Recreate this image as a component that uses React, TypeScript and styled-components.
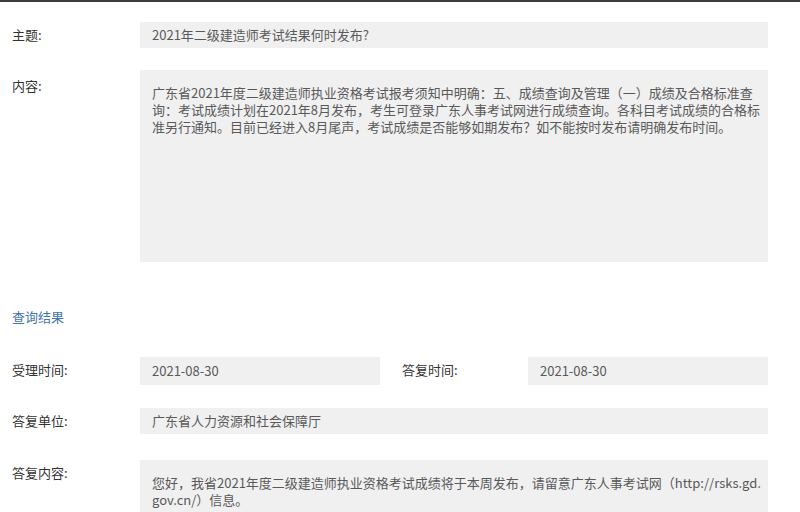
import React from "react";
import styled, { createGlobalStyle } from "styled-components";

const GlobalStyle = createGlobalStyle`
  html, body {
    margin: 0;
    padding: 0;
    background: #ffffff;
  }
  body {
    font-family: "Noto Sans CJK SC", "Noto Sans", sans-serif;
    font-size: 13px;
    color: #333;
  }
`;

const Page = styled.div`
  width: 800px;
  height: 512px;
  overflow: hidden;
  border-top: 2px solid #3c3c3c;
  box-sizing: border-box;
  padding: 0 32px 0 12px;
  display: flex;
  flex-direction: column;
`;

const Row = styled.div<{ $top: number }>`
  display: flex;
  align-items: flex-start;
  margin-top: ${(p) => p.$top}px;
`;

const Label = styled.div<{ $indent?: number; $drop?: number }>`
  flex: none;
  width: ${(p) => (p.$indent ? 126 : 128)}px;
  padding-left: ${(p) => p.$indent || 0}px;
  margin-top: ${(p) => p.$drop || 0}px;
  line-height: 26px;
  color: #333;
  white-space: nowrap;
`;

const Field = styled.div<{ $height?: number; $width?: number }>`
  ${(p) => (p.$width ? `width: ${p.$width}px; flex: none;` : "flex: 1;")}
  height: ${(p) => p.$height || 26}px;
  line-height: ${(p) => p.$height || 26}px;
  background: #f0f0f1;
  color: #595959;
  padding: 0 12px;
  box-sizing: border-box;
  white-space: nowrap;
  overflow: hidden;
`;

const TextArea = styled.div<{ $height: number }>`
  flex: 1;
  height: ${(p) => p.$height}px;
  background: #f0f0f1;
  color: #595959;
  padding: 14px 4px 0 12px;
  box-sizing: border-box;
  line-height: 17px;
  word-break: break-all;
  overflow: hidden;
`;

const SectionTitle = styled.div`
  margin-top: 45px;
  line-height: 20px;
  color: #4274ad;
`;

export default function App() {
  return (
    <>
      <GlobalStyle />
      <Page>
        <Row $top={20}>
          <Label>主题:</Label>
          <Field>2021年二级建造师考试结果何时发布?</Field>
        </Row>
        <Row $top={22}>
          <Label $drop={3}>内容:</Label>
          <TextArea $height={192}>
            广东省2021年度二级建造师执业资格考试报考须知中明确：五、成绩查询及管理（一）成绩及合格标准查询：考试成绩计划在2021年8月发布，考生可登录广东人事考试网进行成绩查询。各科目考试成绩的合格标准另行通知。目前已经进入8月尾声，考试成绩是否能够如期发布？如不能按时发布请明确发布时间。
          </TextArea>
        </Row>
        <SectionTitle>查询结果</SectionTitle>
        <Row $top={30}>
          <Label>受理时间:</Label>
          <Field $height={28} $width={240}>2021-08-30</Field>
          <Label $indent={22}>答复时间:</Label>
          <Field $height={28}>2021-08-30</Field>
        </Row>
        <Row $top={23}>
          <Label>答复单位:</Label>
          <Field>广东省人力资源和社会保障厅</Field>
        </Row>
        <Row $top={26}>
          <Label>答复内容:</Label>
          <TextArea $height={80}>
            您好，我省2021年度二级建造师执业资格考试成绩将于本周发布，请留意广东人事考试网（http://rsks.gd.gov.cn/）信息。
          </TextArea>
        </Row>
      </Page>
    </>
  );
}
